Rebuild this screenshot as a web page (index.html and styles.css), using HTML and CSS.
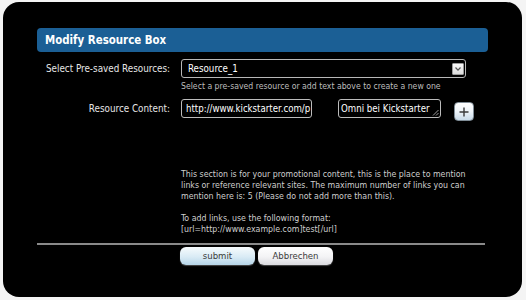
FILE: index.html
```html
<!DOCTYPE html>
<html lang="en">
<head>
<meta charset="utf-8">
<title>Modify Resource Box</title>
<link rel="stylesheet" href="styles.css">
</head>
<body>
<div class="dialog">
  <div class="title">Modify Resource Box</div>
  <div class="form">
    <div class="row row-select">
      <div class="lbl">Select Pre-saved Resources:</div>
      <div class="field">
        <div class="select">
          <span class="select-text">Resource_1</span>
          <span class="arrow"><svg width="8" height="6" viewBox="0 0 8 6"><path d="M1.5 1.5 L4 4.2 L6.5 1.5" fill="none" stroke="#555" stroke-width="1.2"/></svg></span>
        </div>
        <div class="hint">Select a pre-saved resource or add text above to create a new one</div>
      </div>
    </div>
    <div class="row row-content">
      <div class="lbl">Resource Content:</div>
      <div class="field inline">
        <div class="input url">http://www.kickstarter.com/p</div>
        <div class="input textarea">Omni bei Kickstarter<svg class="grip" width="7" height="7" viewBox="0 0 7 7"><path d="M6.5 1 L1 6.5 M6.5 4 L4 6.5" stroke="#9a9a9a" stroke-width="1"/></svg></div>
        <div class="plus"><svg width="10" height="10" viewBox="0 0 10 10"><path d="M5 0.5 V9.5 M0.5 5 H9.5" stroke="#3a3a3a" stroke-width="1.4"/></svg></div>
      </div>
    </div>
    <div class="row">
      <div></div>
      <p class="info">This section is for your promotional content, this is the place to mention<br>links or reference relevant sites. The maximum number of links you can<br>mention here is: 5 (Please do not add more than this).<br><br>To add links, use the following format:<br>[url=http://www.example.com]test[/url]</p>
    </div>
  </div>
  <div class="sep"></div>
  <div class="actions">
    <div class="btn btn-submit">submit</div>
    <div class="btn btn-cancel">Abbrechen</div>
  </div>
</div>
</body>
</html>
```
FILE: styles.css
```css
* { box-sizing: border-box; }
html, body { margin: 0; padding: 0; }
body {
  background: #f4f4f4;
  width: 526px;
  height: 300px;
  overflow: hidden;
  font-family: "DejaVu Sans Condensed", "Liberation Sans", sans-serif;
  padding: 2px 0 0 3px;
}
.dialog {
  width: 519px;
  height: 295px;
  background: #000;
  border-radius: 16px;
  padding: 26px 34px 0 34px;
  color: #e8e8e8;
}
.title {
  height: 24px;
  background: #1b5f95;
  border-radius: 4px;
  padding-left: 8px;
  font-weight: bold;
  font-size: 11.4px;
  line-height: 24px;
  color: #fff;
}
.row {
  display: grid;
  grid-template-columns: 133px 1fr;
  column-gap: 11px;
}
.row-select { margin-top: 7px; }
.row-content { margin-top: 7px; }
.lbl {
  text-align: right;
  font-size: 9.8px;
  line-height: 19px;
  color: #e6e6e6;
  white-space: nowrap;
}
.select {
  width: 285px;
  height: 19px;
  border: 1px solid #b8b8b8;
  border-radius: 3px;
  display: flex;
  align-items: center;
  justify-content: space-between;
  padding: 0 1px 0 6px;
}
.select-text {
  font-size: 9.7px;
  line-height: 17px;
  color: #fff;
}
.arrow {
  width: 12px;
  height: 12px;
  background: linear-gradient(#f8f8f8, #dcdcdc);
  border: 1px solid #9a9a9a;
  border-radius: 1px;
  display: flex;
  align-items: center;
  justify-content: center;
  margin-top: 1px;
}
.hint {
  margin-top: 3px;
  font-size: 8.65px;
  line-height: 11px;
  color: #bdbdbd;
  white-space: nowrap;
}
.inline {
  display: flex;
  align-items: flex-start;
}
.input {
  height: 19px;
  border: 1px solid #bcbcbc;
  border-radius: 3px;
  font-size: 9.6px;
  line-height: 17px;
  color: #fff;
  white-space: nowrap;
  overflow: hidden;
}
.url {
  width: 131px;
  padding-left: 4px;
}
.textarea {
  width: 103px;
  margin-left: 26px;
  padding-left: 2px;
  position: relative;
}
.grip {
  position: absolute;
  right: 1px;
  bottom: 1px;
}
.plus {
  width: 20px;
  height: 19px;
  margin-left: 13px;
  margin-top: 3px;
  border-radius: 4px;
  background: linear-gradient(#ffffff, #eef4f9 50%, #c9dbe9);
  border: 1px solid #7f8c96;
  display: flex;
  align-items: center;
  justify-content: center;
}
.info {
  grid-column: 2;
  margin: 48px 0 0 0;
  font-size: 8.75px;
  line-height: 11px;
  color: #cfcfcf;
  white-space: nowrap;
}
.sep {
  height: 2px;
  background: #8a8a8a;
  margin: 8px 3px 0 0;
}
.actions {
  display: flex;
  gap: 3px;
  margin: 2px 0 0 143px;
}
.btn {
  width: 75px;
  height: 18px;
  border-radius: 6px;
  font-size: 9.5px;
  line-height: 18px;
  text-align: center;
  color: #3a3a3a;
  box-shadow: 0 1px 1px rgba(120,120,120,0.6);
}
.btn-submit {
  background: linear-gradient(#f7fbfd, #d9ebf5 55%, #b6d5e8);
}
.btn-cancel {
  background: linear-gradient(#ffffff, #f3f3f5 55%, #dadadf);
}
```
